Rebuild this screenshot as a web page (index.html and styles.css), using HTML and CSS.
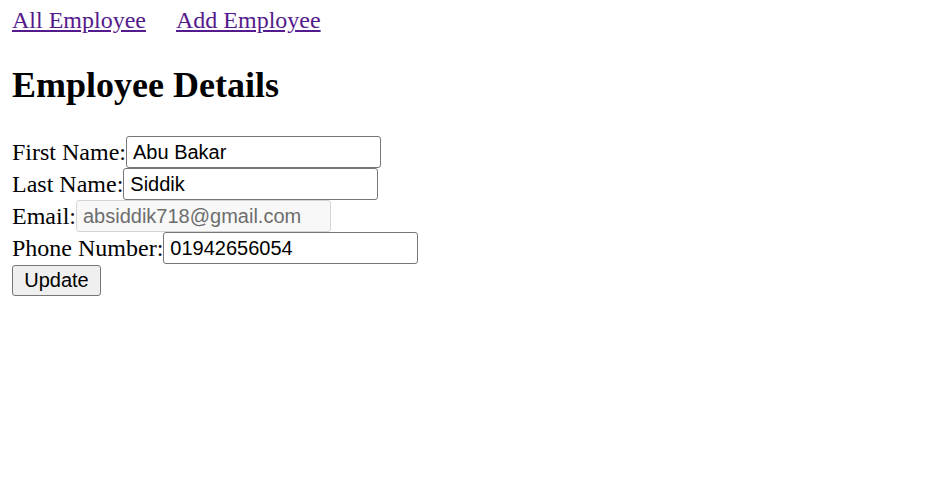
FILE: index.html
```html
<!DOCTYPE html>
<html>
<head>
<meta charset="utf-8">
<link rel="stylesheet" href="styles.css">
</head>
<body>
<nav class="nav"><a href="#">All Employee</a><a href="#">Add Employee</a></nav>
<h2 class="title">Employee Details</h2>
<form class="form">
<div class="row"><label>First Name:</label><input class="field" type="text" value="Abu Bakar"></div>
<div class="row"><label>Last Name:</label><input class="field" type="text" value="Siddik"></div>
<div class="row"><label>Email:</label><input class="field" type="text" value="absiddik718@gmail.com" disabled></div>
<div class="row"><label>Phone Number:</label><input class="field" type="text" value="01942656054"></div>
<div class="row"><button class="btn" type="button">Update</button></div>
</form>
</body>
</html>
```
FILE: styles.css
```css
html, body {
  background: #fff;
}
body {
  margin: 12px;
  font-family: "Liberation Serif", "Times New Roman", serif;
  font-size: 24px;
  color: #000;
}
.nav {
  display: flex;
  gap: 30px;
  line-height: 16px;
}
.nav a {
  color: #551a8b;
  text-decoration: underline;
}
.title {
  font-size: 36px;
  font-weight: bold;
  margin: 37px 0 30px;
  line-height: 41px;
}
.form {
  margin: 0;
}
.row {
  display: flex;
  align-items: center;
  height: 32px;
}
.field {
  box-sizing: border-box;
  width: 255px;
  height: 32px;
  font-family: "Liberation Sans", Arial, sans-serif;
  font-size: 20px;
  padding: 1px 6px;
  border: 1px solid #767676;
  border-radius: 3px;
  color: #000;
  background: #fff;
  margin: 0;
}
.field:disabled {
  background: #f8f8f8;
  border-color: #d4d4d4;
  color: #6d6d6d;
}
.btn {
  box-sizing: border-box;
  height: 31px;
  width: 89px;
  font-family: "Liberation Sans", Arial, sans-serif;
  font-size: 20px;
  padding: 0;
  border: 1px solid #767676;
  border-radius: 3px;
  background: #efefef;
  color: #000;
  margin: 0;
}
```
